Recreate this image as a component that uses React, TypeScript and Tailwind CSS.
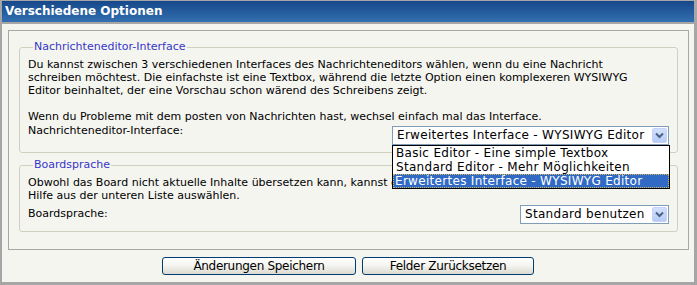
import type { FC } from 'react'

const ArrowBtn: FC = () => (
  <div className="w-[15px] h-[15px] mr-[1px] rounded-[2px] bg-gradient-to-b from-[#d3e0fb] to-[#b6cbf5] border border-[#c3d3fd] flex items-center justify-center">
    <svg width="9" height="7" viewBox="0 0 9 7">
      <path d="M1 1.5 L4.5 5 L8 1.5" fill="none" stroke="#4d6185" strokeWidth="2" />
    </svg>
  </div>
)

const FakeSelect: FC<{ value: string; width: string }> = ({ value, width }) => (
  <div className={`${width} h-[19px] bg-white border border-[#7f9db9] flex items-center justify-between`}>
    <span className="pl-[4px] text-[12px] leading-[15px] tracking-[0.3px] text-black whitespace-nowrap">{value}</span>
    <ArrowBtn />
  </div>
)

export default function App() {
  return (
    <div className="w-[697px] h-[285px] bg-[#f5f5f0] border-t border-l-2 border-r-[3px] border-b-[3px] border-[#a6a6a6] font-['DejaVu_Sans',sans-serif] text-[11px] text-black flex flex-col">
      {/* Kopfzeile */}
      <div className="h-[23px] shrink-0 bg-gradient-to-b from-[#16488a] to-[#3370b0] border-b-2 border-[#a6a6a6] flex items-center pl-[3px]">
        <span className="text-white font-bold text-[12px] leading-[15px]">Verschiedene Optionen</span>
      </div>

      <div className="mt-[6px] ml-[6px] mr-[5px] h-[220px] border border-[#a8a8a8] px-[10px] pt-[10px]">
        {/* Nachrichteneditor */}
        <fieldset className="border border-[#d0d0bf] rounded-[3px] pl-[8px] pr-[8px] pb-[7px] pt-[5px]">
          <legend className="ml-[5px] px-[1px] text-[#3535c8] leading-[12px]">Nachrichteneditor-Interface</legend>
          <div className="leading-[13px]">
            Du kannst zwischen 3 verschiedenen Interfaces des Nachrichteneditors wählen, wenn du eine Nachricht<br />
            schreiben möchtest. Die einfachste ist eine Textbox, während die letzte Option einen komplexeren WYSIWYG<br />
            Editor beinhaltet, der eine Vorschau schon wärend des Schreibens zeigt.<br />
            <br />
            Wenn du Probleme mit dem posten von Nachrichten hast, wechsel einfach mal das Interface.
          </div>
          <div className="flex justify-between items-start">
            <span className="mt-[1px] leading-[13px]">Nachrichteneditor-Interface:</span>
            <div className="relative mt-[3px]">
              <FakeSelect value="Erweitertes Interface - WYSIWYG Editor" width="w-[277px]" />
              <div className="absolute z-10 left-0 top-[19px] w-[278px] bg-white border border-black text-[12px] leading-[14px] tracking-[0.3px] whitespace-nowrap">
                <div className="pl-[3px]">Basic Editor - Eine simple Textbox</div>
                <div className="pl-[3px]">Standard Editor - Mehr Möglichkeiten</div>
                <div className="pl-[2px] bg-[#316ac5] text-white outline-1 outline-dotted outline-[#d9b85a] -outline-offset-1">Erweitertes Interface - WYSIWYG Editor</div>
              </div>
            </div>
          </div>
        </fieldset>

        {/* Boardsprache */}
        <fieldset className="mt-[6px] border border-[#d0d0bf] rounded-[3px] pl-[8px] pr-[8px] pb-[7px] pt-[5px]">
          <legend className="ml-[5px] px-[1px] text-[#3535c8] leading-[12px]">Boardsprache</legend>
          <div className="leading-[13px]">
            Obwohl das Board nicht aktuelle Inhalte übersetzen kann, kannst du die Sprache der Oberfläche mit<br />
            Hilfe aus der unteren Liste auswählen.
          </div>
          <div className="flex justify-between items-start mt-[3px]">
            <span className="mt-[2px] leading-[13px]">Boardsprache:</span>
            <FakeSelect value="Standard benutzen" width="w-[149px]" />
          </div>
        </fieldset>
      </div>

      {/* Buttons */}
      <div className="mt-[7px] flex justify-center gap-[6px]">
        <button className="w-[194px] h-[18px] rounded-[3px] border border-[#003c74] bg-gradient-to-b from-[#ffffff] via-[#f3f3ef] to-[#dcdad0] text-[12px] leading-[14px] tracking-[-0.3px] text-black">
          Änderungen Speichern
        </button>
        <button className="w-[172px] h-[18px] rounded-[3px] border border-[#003c74] bg-gradient-to-b from-[#ffffff] via-[#f3f3ef] to-[#dcdad0] text-[12px] leading-[14px] tracking-[-0.3px] text-black">
          Felder Zurücksetzen
        </button>
      </div>
    </div>
  )
}
